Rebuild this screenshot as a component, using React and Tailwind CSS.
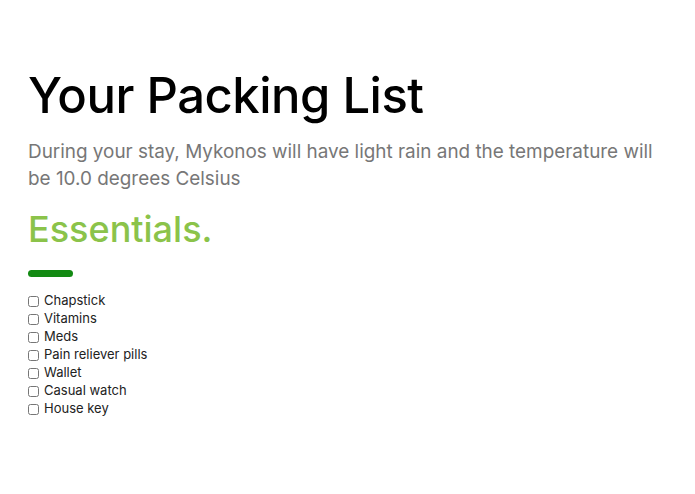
import React from 'react';

const items = [
  'Chapstick',
  'Vitamins',
  'Meds',
  'Pain reliever pills',
  'Wallet',
  'Casual watch',
  'House key',
  'Phone charger',
];

export default function App() {
  return (
    <div
      className="min-h-screen bg-white px-[28px] pt-[66px]"
      style={{ fontFamily: 'Inter, "Noto Sans", sans-serif' }}
    >
      <h1 className="text-[49px] leading-[60px] font-medium text-black tracking-[-0.5px]">
        Your Packing List
      </h1>
      <p className="mt-[12px] text-[18.9px] leading-[27px] text-[#777] max-w-[640px]">
        During your stay, Mykonos will have light rain and the temperature will be 10.0
        degrees Celsius
      </p>
      <h2 className="mt-[14px] text-[36px] leading-[46px] font-medium text-[#8bc34a]">
        Essentials.
      </h2>
      <div className="mt-[18px] h-[7px] w-[45px] rounded-full bg-[#138a13]" />
      <ul className="mt-[15px] h-[128px] overflow-hidden">
        {items.map((item) => (
          <li key={item} className="flex h-[18px] items-center gap-[5px]">
            <input type="checkbox" className="m-0 h-[11px] w-[11px]" />
            <span className="text-[13px] text-[#222]">{item}</span>
          </li>
        ))}
      </ul>
    </div>
  );
}
